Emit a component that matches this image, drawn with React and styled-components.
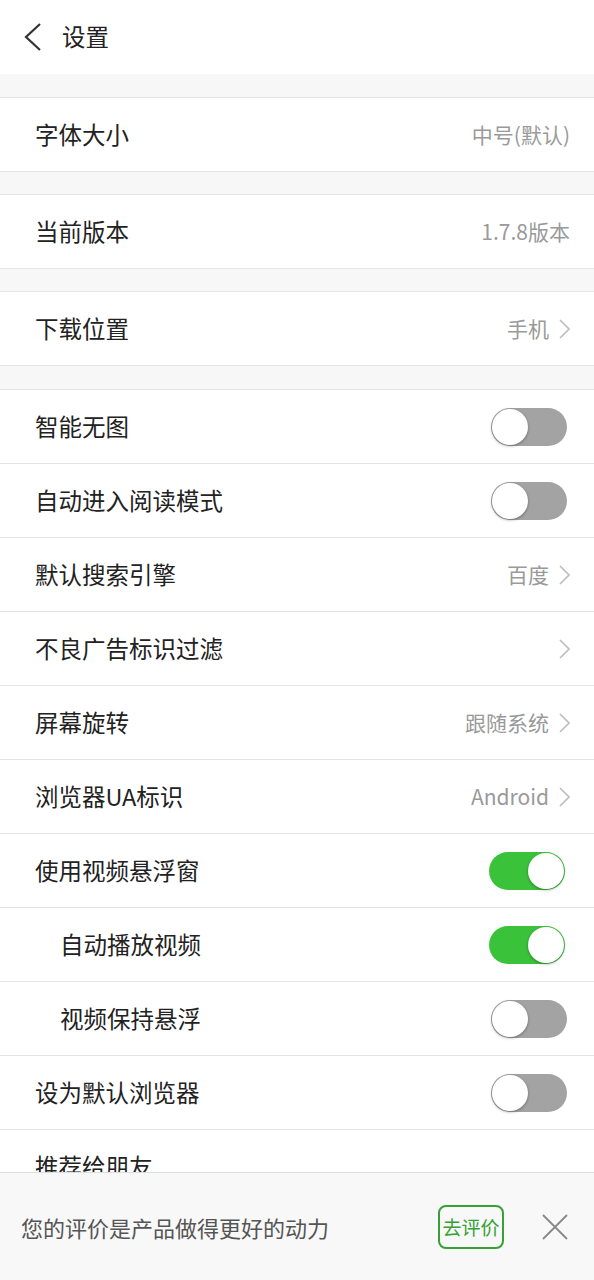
import styled, { createGlobalStyle } from "styled-components";

const GlobalStyle = createGlobalStyle`
  html, body {
    margin: 0;
    padding: 0;
    background: #f7f7f7;
    font-family: "Noto Sans CJK SC", "Noto Sans", Roboto, sans-serif;
  }
  * { box-sizing: border-box; }
`;

const Page = styled.div`
  display: flex;
  flex-direction: column;
  width: 594px;
  height: 1280px;
  overflow: hidden;
  background: #f7f7f7;
`;

const Header = styled.div`
  display: flex;
  align-items: center;
  height: 74px;
  flex-shrink: 0;
  background: #fff;
  padding-left: 22px;
  gap: 20px;
`;

const Title = styled.div`
  font-size: 23.5px;
  line-height: 1;
  color: #222;
`;

const Content = styled.div`
  flex: 1;
  overflow: hidden;
  display: flex;
  flex-direction: column;
  gap: 22px;
  padding-top: 23px;
`;

const Group = styled.div`
  background: #fff;
  border-top: 1px solid #e4e4e4;
  border-bottom: 1px solid #e4e4e4;
  margin-top: ${(p) => p.$shift || 0}px;
`;

const Row = styled.div`
  display: flex;
  align-items: center;
  height: 74px;
  padding: 0 24px 0 ${(p) => (p.$indent ? 60 : 35)}px;
  & + & {
    border-top: 1px solid #e4e4e4;
  }
  &:first-child {
    height: 73px;
  }
`;

const Label = styled.div`
  flex: 1;
  font-size: 23.5px;
  line-height: 1;
  color: #222;
`;

const Value = styled.div`
  font-size: 21px;
  line-height: 1;
  color: #9a9a9a;
  margin-right: ${(p) => (p.$arrow ? 10 : 0)}px;
`;

const Track = styled.div`
  position: relative;
  width: 76px;
  height: 38px;
  border-radius: 19px;
  margin-right: ${(p) => (p.$on ? 5 : 3)}px;
  background: ${(p) => (p.$on ? "#3bc23b" : "#a3a3a3")};
`;

const Knob = styled.div`
  position: absolute;
  top: 1px;
  left: ${(p) => (p.$on ? 39 : 1)}px;
  width: 36px;
  height: 36px;
  border-radius: 50%;
  background: #fff;
  box-shadow: 0 1px 3px rgba(0, 0, 0, 0.35);
`;

const BottomBar = styled.div`
  flex-shrink: 0;
  height: 108px;
  display: flex;
  align-items: center;
  background: #f8f8f8;
  border-top: 1px solid #dedede;
  padding: 0 26px 0 21px;
`;

const Tip = styled.div`
  flex: 1;
  font-size: 22px;
  line-height: 1;
  color: #555;
`;

const RateButton = styled.div`
  width: 66px;
  height: 44px;
  border: 2px solid #36a235;
  border-radius: 8px;
  color: #36a235;
  font-size: 19px;
  display: flex;
  align-items: center;
  justify-content: center;
  margin-right: 38px;
`;

const Chevron = () => (
  <svg width="11" height="20" viewBox="0 0 11 20">
    <path d="M1 1 L10 10 L1 19" fill="none" stroke="#bdbdbd" strokeWidth="1.6" />
  </svg>
);

const BackIcon = () => (
  <svg width="20" height="30" viewBox="0 0 20 30">
    <path d="M18 2 L4 15 L18 28" fill="none" stroke="#333" strokeWidth="2.2" />
  </svg>
);

const CloseIcon = () => (
  <svg width="26" height="26" viewBox="0 0 26 26">
    <path d="M1 1 L25 25 M25 1 L1 25" stroke="#888" strokeWidth="1.8" />
  </svg>
);

const Toggle = ({ on }) => (
  <Track $on={on}>
    <Knob $on={on} />
  </Track>
);

const Item = ({ label, value, arrow, toggle, indent }) => (
  <Row $indent={indent}>
    <Label>{label}</Label>
    {value && <Value $arrow={arrow}>{value}</Value>}
    {arrow && <Chevron />}
    {toggle !== undefined && <Toggle on={toggle} />}
  </Row>
);

export default function App() {
  return (
    <Page>
      <GlobalStyle />
      <Header>
        <BackIcon />
        <Title>设置</Title>
      </Header>
      <Content>
        <Group>
          <Item label="字体大小" value="中号(默认)" />
        </Group>
        <Group>
          <Item label="当前版本" value="1.7.8版本" />
        </Group>
        <Group>
          <Item label="下载位置" value="手机" arrow />
        </Group>
        <Group $shift={1}>
          <Item label="智能无图" toggle={false} />
          <Item label="自动进入阅读模式" toggle={false} />
          <Item label="默认搜索引擎" value="百度" arrow />
          <Item label="不良广告标识过滤" arrow />
          <Item label="屏幕旋转" value="跟随系统" arrow />
          <Item label="浏览器UA标识" value="Android" arrow />
          <Item label="使用视频悬浮窗" toggle={true} />
          <Item label="自动播放视频" toggle={true} indent />
          <Item label="视频保持悬浮" toggle={false} indent />
          <Item label="设为默认浏览器" toggle={false} />
          <Item label="推荐给朋友" />
        </Group>
      </Content>
      <BottomBar>
        <Tip>您的评价是产品做得更好的动力</Tip>
        <RateButton>去评价</RateButton>
        <CloseIcon />
      </BottomBar>
    </Page>
  );
}
